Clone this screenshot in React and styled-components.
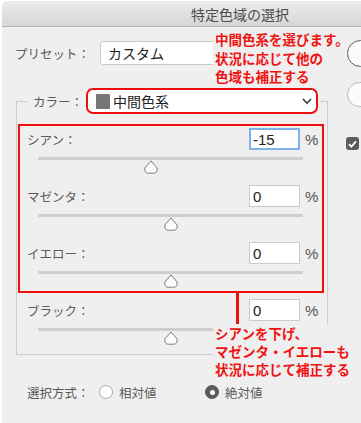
import React from "react";
import styled, { createGlobalStyle } from "styled-components";

const Global = createGlobalStyle`
  html, body { margin: 0; padding: 0; background: #ffffff; overflow: hidden; }
  body { font-family: "Noto Sans CJK JP", "Noto Sans", sans-serif; }
  * { box-sizing: border-box; }
`;

const Window = styled.div`
  position: relative;
  width: 476px;
  min-height: 422px;
  margin: 1px 0 0 2px;
  background: #efefef;
  border-radius: 5px 5px 0 0;
  overflow: hidden;
`;

const TitleBar = styled.div`
  height: 26px;
  border-bottom: 1px solid #b3b3b3;
  background: linear-gradient(#ececec, #d6d6d6);
  display: flex;
  align-items: center;
  justify-content: center;
  font-size: 14px;
  color: #4b4b4b;
`;

const Body = styled.div`
  display: flex;
`;

const Main = styled.div`
  width: 343px;
  flex-shrink: 0;
`;

const Side = styled.div`
  display: flex;
  flex-direction: column;
  align-items: flex-start;
  padding-top: 13px;
`;

const Label = styled.span`
  font-size: 12.5px;
  color: #5a5a5a;
  white-space: nowrap;
  width: ${(p) => (p.$w ? `${p.$w}px` : "auto")};
  flex-shrink: 0;
`;

const PresetRow = styled.div`
  display: flex;
  align-items: center;
  padding: 14px 0 0 13px;
`;

const PresetSelect = styled.div`
  width: 218px;
  height: 24px;
  border: 1px solid #c9c9c9;
  border-radius: 3px;
  background: #ffffff;
  display: flex;
  align-items: center;
  padding-left: 7px;
  font-size: 14px;
  color: #222;
`;

const Group = styled.fieldset`
  margin: 23px 0 0 14px;
  width: 312px;
  min-width: 0;
  border: 1px solid #cdcdcd;
  padding: 0 3px 9px 1px;
`;

const Legend = styled.legend`
  margin-left: 9px;
  padding: 0 2px 0 6px;
`;

const LegendInner = styled.span`
  display: inline-flex;
  align-items: center;
  vertical-align: top;
`;

const ColorSelect = styled.div`
  width: 232px;
  height: 26px;
  border: 2px solid #ec0d0d;
  border-radius: 7px;
  background: #ffffff;
  display: flex;
  align-items: center;
  padding: 0 4px 0 8px;
  font-size: 14px;
  color: #222;
`;

const Swatch = styled.span`
  width: 14px;
  height: 15px;
  background: #767676;
  border-radius: 1px;
  margin-right: 3px;
`;

const Chevron = styled.svg`
  margin-left: auto;
`;

const RedBox = styled.div`
  margin-top: 10px;
  border: 2px solid #ec0d0d;
  padding: 2px 0 3px;
  display: flex;
  flex-direction: column;
  gap: 11px;
`;

const BlackWrap = styled.div`
  padding: 6px 2px 0;
`;

const RowHead = styled.div`
  display: flex;
  align-items: center;
  height: 22px;
  padding-left: 7px;
`;

const NumBox = styled.div`
  margin-left: auto;
  width: 51px;
  height: 22px;
  background: #ffffff;
  border: ${(p) => (p.$focused ? "2px solid #7eb0ea" : "1px solid #cbcbcb")};
  padding-left: ${(p) => (p.$focused ? "2px" : "3px")};
  display: flex;
  align-items: center;
  font-family: "Liberation Sans", Arial, sans-serif;
  font-size: 15px;
  color: #222;
`;

const Pct = styled.span`
  width: 17px;
  margin-left: 5px;
  font-family: "Liberation Sans", Arial, sans-serif;
  font-size: 15px;
  color: #555;
`;

const Slider = styled.div`
  position: relative;
  margin: 7px 19px 0 18px;
  height: 17px;
`;

const Track = styled.div`
  height: 3px;
  background: #cecece;
  border-radius: 1px;
`;

const Thumb = styled.svg`
  position: absolute;
  top: 3px;
  transform: translateX(-50%);
`;

const RadioRow = styled.div`
  display: flex;
  align-items: center;
  height: 20px;
  margin-top: 27px;
  padding-left: 25px;
`;

const RadioOption = styled.label`
  display: flex;
  align-items: center;
  gap: 6px;
  width: 106px;
  font-size: 12.5px;
  color: #5a5a5a;
`;

const RadioDot = styled.span`
  width: 14px;
  height: 14px;
  border-radius: 50%;
  background: ${(p) => (p.$on ? "#5b5b5b" : "#ffffff")};
  border: 1px solid ${(p) => (p.$on ? "#5b5b5b" : "#a8a8a8")};
  display: flex;
  align-items: center;
  justify-content: center;
  &::after {
    content: "";
    display: ${(p) => (p.$on ? "block" : "none")};
    width: 5px;
    height: 5px;
    border-radius: 50%;
    background: #ffffff;
  }
`;

const RoundButton = styled.div`
  width: 90px;
  height: ${(p) => (p.$primary ? "27px" : "25px")};
  margin: ${(p) => (p.$primary ? "0 0 0 2px" : "15px 0 0 2px")};
  border-radius: 14px;
  border: 1px solid ${(p) => (p.$primary ? "#5e5e5e" : "#b8b8b8")};
  background: #fbfbfb;
`;

const CheckBox = styled.span`
  width: 13px;
  height: 13px;
  margin: 30px 0 0 1px;
  border-radius: 3px;
  background: #5c5c5c;
  display: flex;
  align-items: center;
  justify-content: center;
`;

const Note = styled.div`
  position: absolute;
  left: ${(p) => p.$x}px;
  top: ${(p) => p.$y}px;
  width: ${(p) => p.$w}px;
  padding-left: 2px;
  background: #efefef;
  color: #f01313;
  font-weight: 700;
  font-size: 13.5px;
  line-height: ${(p) => p.$lh}px;
  white-space: nowrap;
`;

const Leader = styled.div`
  position: absolute;
  left: 234px;
  top: 292px;
  width: 3px;
  height: 32px;
  background: #ec0d0d;
`;

function ColorRow({ label, value, focused }) {
  const pos = ((value + 100) / 200) * 100;
  return (
    <div>
      <RowHead>
        <Label>{label}</Label>
        <NumBox $focused={focused}>{value}</NumBox>
        <Pct>%</Pct>
      </RowHead>
      <Slider>
        <Track />
        <Thumb width="15" height="14" viewBox="0 0 15 14" style={{ left: `${pos}%` }}>
          <path
            d="M7.5 0.9 L13.6 8 Q14.3 13.2 10 13.2 L5 13.2 Q0.7 13.2 1.4 8 Z"
            fill="#fbfdfd"
            stroke="#7a7a7a"
            strokeWidth="1"
          />
        </Thumb>
      </Slider>
    </div>
  );
}

export default function App() {
  return (
    <>
      <Global />
      <Window>
        <TitleBar>特定色域の選択</TitleBar>
        <Body>
          <Main>
            <PresetRow>
              <Label $w={85}>プリセット：</Label>
              <PresetSelect>カスタム</PresetSelect>
            </PresetRow>
            <Group>
              <Legend>
                <LegendInner>
                  <Label $w={53}>カラー：</Label>
                  <ColorSelect>
                    <Swatch />
                    中間色系
                    <Chevron width="10" height="7" viewBox="0 0 10 7">
                      <polyline points="1,1 5,5.2 9,1" fill="none" stroke="#333" strokeWidth="1.6" />
                    </Chevron>
                  </ColorSelect>
                </LegendInner>
              </Legend>
              <RedBox>
                <ColorRow label="シアン：" value={-15} focused />
                <ColorRow label="マゼンタ：" value={0} />
                <ColorRow label="イエロー：" value={0} />
              </RedBox>
              <BlackWrap>
                <ColorRow label="ブラック：" value={0} />
              </BlackWrap>
            </Group>
            <RadioRow>
              <Label $w={72}>選択方式：</Label>
              <RadioOption>
                <RadioDot />
                相対値
              </RadioOption>
              <RadioOption>
                <RadioDot $on />
                絶対値
              </RadioOption>
            </RadioRow>
          </Main>
          <Side>
            <RoundButton $primary aria-label="OK" />
            <RoundButton aria-label="キャンセル" />
            <CheckBox aria-label="プレビュー">
              <svg width="9" height="8" viewBox="0 0 9 8">
                <polyline points="1,4.2 3.4,6.6 8,1.4" fill="none" stroke="#fff" strokeWidth="1.8" />
              </svg>
            </CheckBox>
          </Side>
        </Body>
        <Note $x={211} $y={29} $w={134} $lh={18.5}>
          中間色系を選びます。
          <br />
          状況に応じて他の
          <br />
          色域も補正する
        </Note>
        <Leader />
        <Note $x={211} $y={323} $w={147} $lh={18}>
          シアンを下げ、
          <br />
          マゼンタ・イエローも
          <br />
          状況に応じて補正する
        </Note>
      </Window>
    </>
  );
}
